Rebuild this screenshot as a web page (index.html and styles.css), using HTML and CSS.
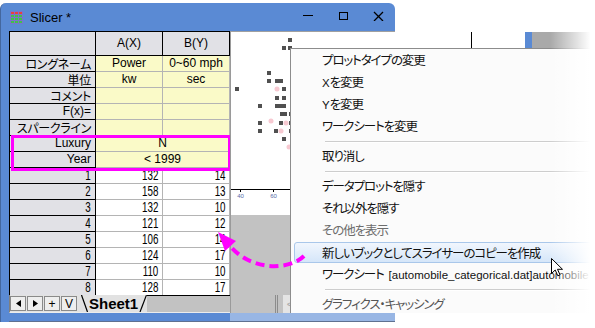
FILE: index.html
```html
<!DOCTYPE html>
<html lang="ja">
<head>
    <meta charset="UTF-8">
    <title>Slicer</title>
    <link rel="stylesheet" href="styles.css">
</head>
<body>
<div class="screen">
    <!-- Slicer window -->
    <div class="window">
        <div class="titlebar">
            <svg class="appicon" width="13" height="13" viewBox="0 0 13 13">
                <rect width="13" height="13" fill="#7c72cc"/>
                <g fill="#e83f3f">
                    <rect x="1" y="1" width="3" height="2"/><rect x="5" y="1" width="3" height="2"/><rect x="9" y="1" width="3" height="2"/>
                </g>
                <g fill="#3fc24a">
                    <rect x="1" y="4" width="3" height="2"/><rect x="5" y="4" width="3" height="2"/><rect x="9" y="4" width="3" height="2"/>
                    <rect x="1" y="7" width="3" height="2"/><rect x="5" y="7" width="3" height="2"/><rect x="9" y="7" width="3" height="2"/>
                    <rect x="1" y="10" width="3" height="2"/><rect x="5" y="10" width="3" height="2"/><rect x="9" y="10" width="3" height="2"/>
                </g>
            </svg>
            <span class="title">Slicer *</span>
            <svg class="controls" width="81" height="10" viewBox="0 0 81 10">
                <rect x="0" y="4" width="10" height="1" fill="#000"/>
                <rect x="36.5" y="1.5" width="8" height="7" fill="none" stroke="#000"/>
                <path d="M71 1 L80 10 M80 1 L71 10" stroke="#000" stroke-width="1.3"/>
            </svg>
        </div>
        <div class="client">
            <div class="sheet">
                <div class="grid">
                    <div class="c hd"></div><div class="c hd">A(X)</div><div class="c hd">B(Y)</div>

                    <div class="c rh jp">ロングネーム</div><div class="c lb">Power</div><div class="c lb">0~60 mph</div>
                    <div class="c rh jp">単位</div><div class="c lb">kw</div><div class="c lb">sec</div>
                    <div class="c rh jp">コメント</div><div class="c lb"></div><div class="c lb"></div>
                    <div class="c rh">F(x)=</div><div class="c lb"></div><div class="c lb"></div>
                    <div class="c rh jp">スパークライン</div><div class="c lb"></div><div class="c lb"></div>
                    <div class="c rh">Luxury</div><div class="c lb span2">N</div>
                    <div class="c rh">Year</div><div class="c lb span2">&lt; 1999</div>

                    <div class="c rh num"><span>1</span></div><div class="c d num"><span>132</span></div><div class="c d num b"><span>14</span></div>
                    <div class="c rh num"><span>2</span></div><div class="c d num"><span>158</span></div><div class="c d num b"><span>13</span></div>
                    <div class="c rh num"><span>3</span></div><div class="c d num"><span>132</span></div><div class="c d num b"><span>10</span></div>
                    <div class="c rh num"><span>4</span></div><div class="c d num"><span>121</span></div><div class="c d num b"><span>12</span></div>
                    <div class="c rh num"><span>5</span></div><div class="c d num"><span>106</span></div><div class="c d num b"><span>14</span></div>
                    <div class="c rh num"><span>6</span></div><div class="c d num"><span>124</span></div><div class="c d num b"><span>17</span></div>
                    <div class="c rh num"><span>7</span></div><div class="c d num"><span>110</span></div><div class="c d num b"><span>10</span></div>
                    <div class="c rh num"><span>8</span></div><div class="c d num"><span>128</span></div><div class="c d num b"><span>17</span></div>

                    <!-- highlight of the slicer rows -->
                    <div class="filter-box"></div>
                </div>
                <div class="tabs">
                    <span class="tb"><svg width="5" height="7"><polygon points="5,0 5,7 0,3.5" fill="#000"/></svg></span>
                    <span class="tb"><svg width="5" height="7"><polygon points="0,0 0,7 5,3.5" fill="#000"/></svg></span>
                    <span class="tb">+</span>
                    <span class="tb">V</span>
                    <span class="sheettab">
                        <svg width="7" height="17"><line x1="0.5" y1="0" x2="6.5" y2="17" stroke="#000" stroke-width="1.2"/></svg>
                        <span class="tabname">Sheet1</span>
                        <svg width="8" height="17"><line x1="1" y1="17" x2="7.5" y2="0" stroke="#000" stroke-width="1.2"/></svg>
                    </span>
                    <span class="tabrest"></span>
                </div>
            </div>
            <div class="graph">
                <div class="plot">
                    <svg width="164" height="183" viewBox="0 0 164 183">
                        <g fill="#f7c9d1">
                            <circle cx="46" cy="57" r="2.5"/><circle cx="55" cy="91" r="2.5"/><circle cx="50" cy="99" r="2.5"/>
                            <circle cx="58" cy="115" r="2.5"/><circle cx="40" cy="89" r="2.5"/>
                        </g>
                        <g fill="#505050">
                            <rect x="57" y="6" width="4" height="4"/>
                            <rect x="51" y="14" width="4" height="4"/><rect x="57" y="14" width="4" height="4"/>
                            <rect x="36" y="39" width="4" height="4"/>
                            <rect x="36" y="47" width="4" height="4"/><rect x="44" y="47" width="8" height="4"/>
                            <rect x="4" y="55" width="4" height="4"/><rect x="51" y="55" width="4" height="4"/>
                            <rect x="44" y="64" width="4" height="4"/><rect x="51" y="64" width="4" height="4"/>
                            <rect x="27" y="72" width="4" height="4"/><rect x="44" y="72" width="11" height="4"/>
                            <rect x="49" y="80" width="7" height="4"/><rect x="58" y="80" width="4" height="4"/>
                            <rect x="27" y="89" width="4" height="4"/><rect x="48" y="89" width="4" height="4"/><rect x="58" y="89" width="4" height="4"/>
                            <rect x="27" y="97" width="4" height="4"/><rect x="43" y="97" width="4" height="4"/><rect x="58" y="97" width="4" height="4"/>
                            <rect x="51" y="105" width="4" height="4"/>
                        </g>
                        <line x1="0" y1="157.5" x2="164" y2="157.5" stroke="#000"/>
                        <line x1="9.5" y1="158" x2="9.5" y2="160" stroke="#000"/>
                        <line x1="42.5" y1="158" x2="42.5" y2="160" stroke="#000"/>
                        <text x="9.5" y="166" class="tick">40</text>
                        <text x="42.5" y="166" class="tick">60</text>
                    </svg>
                </div>
                <div class="outside"></div>
                <div class="hscroll">
                    <span class="split"></span><span class="split"></span>
                    <span class="sbtn">&lt;</span>
                </div>
            </div>
        </div>
        <div class="bottom">
            <div class="bottom-left"></div>
            <div class="bottom-right"></div>
        </div>
    </div>

    <!-- part of the window behind -->
    <div class="backwin">
        <span class="bw-white" style="width:76px"></span>
        <span class="bw-line"></span>
        <span class="bw-white" style="width:53px"></span>
        <span class="bw-blue"></span>
        <span class="bw-gray"></span>
    </div>

    <!-- context menu -->
    <div class="menu">
        <div class="mi">プロットタイプの変更</div>
        <div class="mi"><span class="lat">X</span>を変更</div>
        <div class="mi"><span class="lat">Y</span>を変更</div>
        <div class="mi">ワークシートを変更</div>
        <div class="sep"></div>
        <div class="mi">取り消し</div>
        <div class="sep"></div>
        <div class="mi">データプロットを隠す</div>
        <div class="mi">それ以外を隠す</div>
        <div class="mi dis">その他を表示</div>
        <div class="mi hot">新しいブックとしてスライサーのコピーを作成</div>
        <div class="mi">ワークシート<span class="lat book">[automobile_categorical.dat]automobile</span></div>
        <div class="sep"></div>
        <div class="mi faded">グラフィクス・キャッシング</div>
    </div>

    <svg class="annot" width="595" height="328" viewBox="0 0 595 328">
        <path d="M304 256 C290 270, 252 272, 230 246" fill="none" stroke="#ff00ff" stroke-width="4" stroke-dasharray="9 5"/>
        <polygon points="218,232 236,241 225,251" fill="#ff00ff"/>
    </svg>

    <div class="fade"></div>

    <svg class="cursor" width="13" height="20" viewBox="0 0 13 20">
        <path d="M0.5 0.5 L0.5 15.5 L4.2 12 L6.8 17.8 L9 16.8 L6.5 11.3 L11.5 11.3 Z" fill="#fff" stroke="#000"/>
    </svg>
</div>
</body>
</html>
```

FILE: styles.css
```css
:root{
    --win-blue: #5a8ad4;
    --win-blue-light: #98b6e4;
    --head-bg: #e1e1e6;
    --label-bg: #fafac8;
    --cell-line: #b4b4b4;
    --magenta: #ff00ff;
}
*{
    box-sizing: border-box;
}
body{
    margin: 0;
    background-color: #fff;
    font-family: "Liberation Sans", sans-serif;
    color: #000;
}
.screen{
    position: relative;
    width: 595px;
    height: 328px;
    overflow: hidden;
}

/* window frame */
.window{
    width: 395px;
    margin-top: 3px;
    padding-left: 8px;
    background-color: var(--win-blue);
    border-left: 1px solid #44679e;
    border-radius: 6px 6px 0 0;
}
.titlebar{
    height: 28px;
    margin-left: -8px;
    padding-left: 9px;
    display: flex;
    align-items: center;
}
.appicon{
    margin-right: 7px;
}
.title{
    font-size: 13px;
}
.controls{
    margin-left: auto;
    margin-right: 11px;
    align-self: flex-start;
    margin-top: 8px;
}
.client{
    display: flex;
    height: 282px;
}
.bottom{
    display: flex;
    height: 9px;
    border-bottom: 1px solid #5f7190;
}
.bottom-left{
    width: 221px;
}
.bottom-right{
    flex: 1;
    background-color: var(--win-blue-light);
}

/* worksheet */
.sheet{
    width: 221px;
    display: flex;
    flex-direction: column;
}
.grid{
    position: relative;
    height: 264px;
    overflow: hidden;
    background-color: #fff;
    border-left: 1px solid #000;
    border-top: 1px solid #000;
    display: grid;
    grid-template-columns: 86px 67px 67px;
    grid-template-rows: 24px;
    grid-auto-rows: 16px;
}
.c{
    border-right: 1px solid var(--cell-line);
    border-bottom: 1px solid var(--cell-line);
    font-size: 12px;
    line-height: 15px;
    white-space: nowrap;
}
.hd{
    background-color: var(--head-bg);
    border-color: #000;
    text-align: center;
    line-height: 23px;
}
.rh{
    background-color: var(--head-bg);
    border-color: #000;
    text-align: right;
    padding-right: 4px;
}
.jp{
    font-family: "Noto Sans CJK JP", sans-serif;
    font-feature-settings: "palt";
    font-size: 12px;
    line-height: 15px;
    letter-spacing: -0.3px;
}
.lb{
    background-color: var(--label-bg);
    text-align: center;
}
.span2{
    grid-column: span 2;
}
.d{
    background-color: #fff;
}
.num{
    text-align: right;
    padding-right: 4px;
    font-size: 14px;
}
.num span{
    display: inline-block;
    transform: scaleX(0.7);
    transform-origin: right center;
}
.num.b{
    padding-right: 3px;
}
.filter-box{
    position: absolute;
    left: 1px;
    top: 103px;
    width: 220px;
    height: 36px;
    border: 3px solid var(--magenta);
}

/* sheet tabs */
.tabs{
    height: 18px;
    display: flex;
    background-color: #e2e2e2;
    border-left: 1px solid #808080;
    border-bottom: 1px solid #ececec;
}
.tb{
    width: 16px;
    height: 15px;
    margin: 1px 1px 0 0;
    display: flex;
    align-items: center;
    justify-content: center;
    background-color: #eeeeee;
    border: 1px solid #8a8a8a;
    font-size: 12px;
    line-height: 1;
}
.sheettab{
    display: flex;
    margin-left: 3px;
}
.tabname{
    font-weight: bold;
    font-size: 15px;
    line-height: 17px;
    padding: 0 1px 0 1px;
}
.tabrest{
    flex: 1;
    background-color: #c2c2c2;
    border-top: 1px solid #000;
}

/* graph */
.graph{
    width: 165px;
    border-left: 1px solid #9a9a9a;
    border-top: 1px solid #a0a0a0;
    display: flex;
    flex-direction: column;
}
.plot{
    height: 183px;
    background-color: #fff;
}
.plot svg{
    display: block;
}
.tick{
    font-size: 6px;
    fill: #5a6aa8;
    text-anchor: middle;
    font-family: "Liberation Sans", sans-serif;
}
.outside{
    height: 80px;
    background-color: #c2c2c2;
}
.hscroll{
    height: 18px;
    display: flex;
    padding-left: 44px;
    background-color: #c2c2c2;
}
.split{
    width: 1px;
    margin-right: 1px;
    background-color: #8c8c8c;
}
.sbtn{
    margin-left: 4px;
    width: 14px;
    background-color: #e4e4e4;
    color: #a8a8a8;
    font-size: 11px;
    line-height: 18px;
    text-align: center;
}

/* window behind */
.backwin{
    position: absolute;
    left: 395px;
    top: 32px;
    width: 200px;
    height: 16px;
    display: flex;
}
.bw-white{
    background-color: #fff;
}
.bw-line{
    width: 1px;
    background-color: #000;
}
.bw-blue{
    width: 7px;
    background-color: var(--win-blue);
}
.bw-gray{
    flex: 1;
    background-color: #a9a9a9;
}

/* context menu */
.menu{
    position: absolute;
    left: 290px;
    top: 48px;
    width: 305px;
    height: 265px;
    overflow: hidden;
    background-color: #fbfbfb;
    border-left: 1px solid #8c8c8c;
    border-top: 1px solid #8c8c8c;
    font-family: "Noto Sans CJK JP", sans-serif;
    font-feature-settings: "palt";
    font-size: 12.5px;
    letter-spacing: -1.1px;
    color: #111;
}
.mi{
    height: 22px;
    line-height: 22px;
    padding-left: 31px;
    white-space: nowrap;
}
.lat{
    font-family: "Liberation Sans", sans-serif;
    font-size: 11.5px;
    letter-spacing: 0;
}
.book{
    margin-left: 5px;
}
.sep{
    height: 8px;
    padding-left: 34px;
    display: flex;
    align-items: center;
}
.sep::after{
    content: "";
    flex: 1;
    height: 1px;
    background-color: #cdcdcd;
    box-shadow: 0 1px 0 #fff;
}
.dis{
    color: #6d6d6d;
}
.hot{
    height: 21px;
    line-height: 19px;
    margin: 1px 0 0 3px;
    padding-left: 27px;
    border: 1px solid #a9c7ea;
    border-radius: 3px;
    background: linear-gradient(#f1f6fd, #d5e6f9);
}
.faded{
    color: #555;
}

/* overlays */
.annot{
    position: absolute;
    left: 0;
    top: 0;
}
.fade{
    position: absolute;
    left: 550px;
    top: 0;
    width: 45px;
    height: 328px;
    background: linear-gradient(to right, rgba(255,255,255,0), #fff 90%);
}
.cursor{
    position: absolute;
    left: 551px;
    top: 258px;
}
```
